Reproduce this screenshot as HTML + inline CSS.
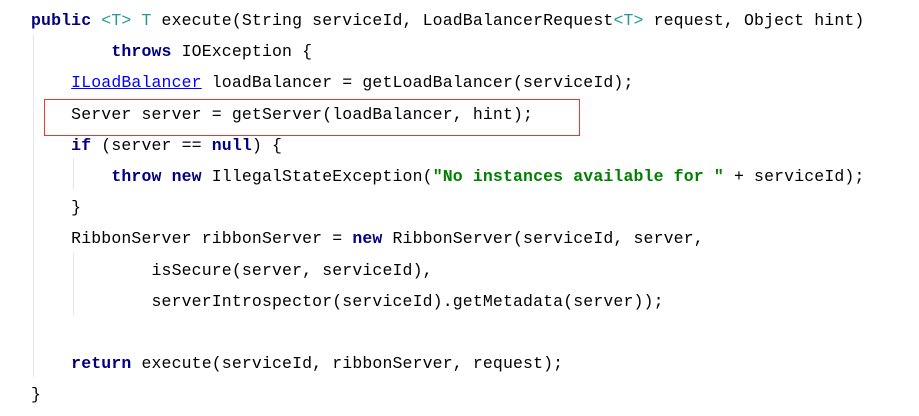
<!DOCTYPE html>
<html><head><meta charset="utf-8"><style>
body{margin:0;background:#fff;width:919px;height:416px;overflow:hidden;position:relative}
.code{position:absolute;left:31px;top:5px;font-family:"Liberation Mono","Noto Sans CJK SC",monospace;font-size:16.5px;letter-spacing:0.14px;line-height:31.2px;white-space:pre;color:#000}
.k{color:#000080;font-weight:bold}
.s{color:#008000;font-weight:bold}
.t{color:#20999d}
.u{color:#0000ff;text-decoration:underline}
.g{position:absolute;width:1px;background:#e6e6e6}
.box{position:absolute;left:44px;top:99px;width:534px;height:35px;border:1px solid #e53935}
</style></head><body>
<div class="g" style="left:33px;top:34px;height:343px"></div>
<div class="g" style="left:73px;top:158px;height:32px"></div>
<div class="g" style="left:73px;top:253px;height:62px"></div>
<div class="box"></div>
<div class="code"><span class="k">public</span> <span class="t">&lt;T&gt; T</span> execute(String serviceId, LoadBalancerRequest<span class="t">&lt;T&gt;</span> request, Object hint)
        <span class="k">throws</span> IOException {
    <span class="u">ILoadBalancer</span> loadBalancer = getLoadBalancer(serviceId);
    Server server = getServer(loadBalancer, hint);
    <span class="k">if</span> (server == <span class="k">null</span>) {
        <span class="k">throw new</span> IllegalStateException(<span class="s">"No instances available for "</span> + serviceId);
    }
    RibbonServer ribbonServer = <span class="k">new</span> RibbonServer(serviceId, server,
            isSecure(server, serviceId),
            serverIntrospector(serviceId).getMetadata(server));

    <span class="k">return</span> execute(serviceId, ribbonServer, request);
}</div>
</body></html>
